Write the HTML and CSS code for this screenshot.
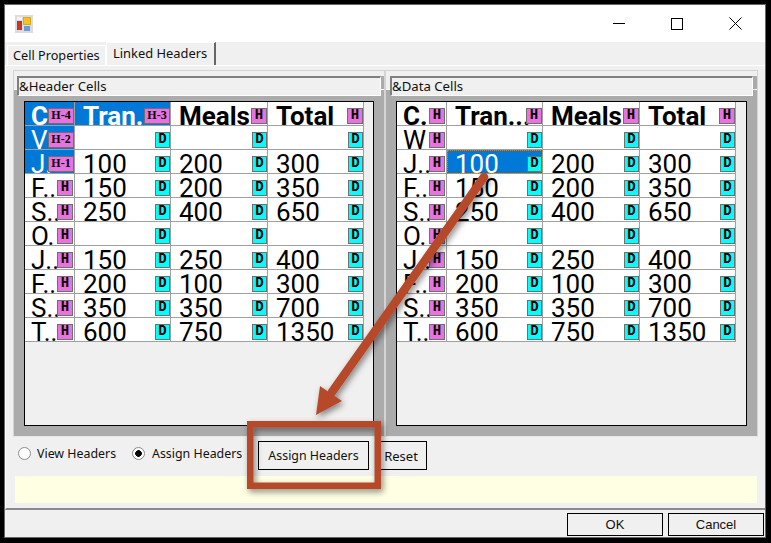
FILE: index.html
```html
<!DOCTYPE html>
<html lang="en">
<head>
<meta charset="utf-8">
<title>Linked Headers</title>
<link rel="stylesheet" href="styles.css">
</head>
<body>
<div class="window">
  <header class="titlebar">
    <svg class="app-icon" width="18" height="18" viewBox="0 0 18 18">
      <rect width="18" height="18" fill="#dcdcdc"/>
      <rect x="8.5" y="2.5" width="7" height="7" fill="#f6c324" stroke="#d9a928"/>
      <rect x="2.5" y="6.5" width="4" height="8" fill="#c8382c" stroke="#9c4038"/>
      <rect x="9" y="11" width="6" height="5" fill="#6a9be0"/>
      <rect x="2" y="2" width="5" height="3" fill="#f4f4f4"/>
    </svg>
    <div class="win-controls">
      <svg width="12" height="12" viewBox="0 0 12 12"><path d="M0 5.5H12" stroke="#000" fill="none"/></svg>
      <svg width="12" height="12" viewBox="0 0 12 12"><rect x=".5" y=".5" width="11" height="11" stroke="#000" fill="none"/></svg>
      <svg width="13" height="13" viewBox="0 0 13 13"><path d="M.5.5L12.5 12.5M12.5.5L.5 12.5" stroke="#000" fill="none"/></svg>
    </div>
  </header>
  <nav class="tabs">
    <span class="tab">Cell Properties</span>
    <span class="tab tab-active">Linked Headers</span>
  </nav>
  <main class="page">
    <div class="panels">
      <section class="panel">
        <div class="caption">&amp;Header Cells</div>
        <div class="well">
          <div class="grid">
            <div class="cell first head sel"><span class="txt">C</span><b class="tag h wide">H-4</b></div>
            <div class="cell head sel"><span class="txt">Tran.</span><b class="tag h wide">H-3</b></div>
            <div class="cell head"><span class="txt">Meals</span><b class="tag h">H</b></div>
            <div class="cell head"><span class="txt">Total</span><b class="tag h">H</b></div>

            <div class="cell first sel"><span class="txt">V</span><b class="tag h wide">H-2</b></div>
            <div class="cell"><b class="tag d">D</b></div>
            <div class="cell"><b class="tag d">D</b></div>
            <div class="cell"><b class="tag d">D</b></div>

            <div class="cell first sel"><span class="txt">J.</span><b class="tag h wide">H-1</b></div>
            <div class="cell"><span class="txt">100</span><b class="tag d">D</b></div>
            <div class="cell"><span class="txt">200</span><b class="tag d">D</b></div>
            <div class="cell"><span class="txt">300</span><b class="tag d">D</b></div>

            <div class="cell first"><span class="txt">F..</span><b class="tag h">H</b></div>
            <div class="cell"><span class="txt">150</span><b class="tag d">D</b></div>
            <div class="cell"><span class="txt">200</span><b class="tag d">D</b></div>
            <div class="cell"><span class="txt">350</span><b class="tag d">D</b></div>

            <div class="cell first"><span class="txt">S..</span><b class="tag h">H</b></div>
            <div class="cell"><span class="txt">250</span><b class="tag d">D</b></div>
            <div class="cell"><span class="txt">400</span><b class="tag d">D</b></div>
            <div class="cell"><span class="txt">650</span><b class="tag d">D</b></div>

            <div class="cell first"><span class="txt">O.</span><b class="tag h">H</b></div>
            <div class="cell"><b class="tag d">D</b></div>
            <div class="cell"><b class="tag d">D</b></div>
            <div class="cell"><b class="tag d">D</b></div>

            <div class="cell first"><span class="txt">J..</span><b class="tag h">H</b></div>
            <div class="cell"><span class="txt">150</span><b class="tag d">D</b></div>
            <div class="cell"><span class="txt">250</span><b class="tag d">D</b></div>
            <div class="cell"><span class="txt">400</span><b class="tag d">D</b></div>

            <div class="cell first"><span class="txt">F..</span><b class="tag h">H</b></div>
            <div class="cell"><span class="txt">200</span><b class="tag d">D</b></div>
            <div class="cell"><span class="txt">100</span><b class="tag d">D</b></div>
            <div class="cell"><span class="txt">300</span><b class="tag d">D</b></div>

            <div class="cell first"><span class="txt">S..</span><b class="tag h">H</b></div>
            <div class="cell"><span class="txt">350</span><b class="tag d">D</b></div>
            <div class="cell"><span class="txt">350</span><b class="tag d">D</b></div>
            <div class="cell"><span class="txt">700</span><b class="tag d">D</b></div>

            <div class="cell first"><span class="txt">T..</span><b class="tag h">H</b></div>
            <div class="cell"><span class="txt">600</span><b class="tag d">D</b></div>
            <div class="cell"><span class="txt">750</span><b class="tag d">D</b></div>
            <div class="cell"><span class="txt">1350</span><b class="tag d">D</b></div>
          </div>
        </div>
      </section>
      <section class="panel panel-data">
        <div class="caption">&amp;Data Cells</div>
        <div class="well">
          <div class="grid">
            <div class="cell first head"><span class="txt">C.</span><b class="tag h">H</b></div>
            <div class="cell head"><span class="txt">Tran...</span><b class="tag h">H</b></div>
            <div class="cell head"><span class="txt">Meals</span><b class="tag h">H</b></div>
            <div class="cell head"><span class="txt">Total</span><b class="tag h">H</b></div>

            <div class="cell first"><span class="txt">W</span><b class="tag h">H</b></div>
            <div class="cell"><b class="tag d">D</b></div>
            <div class="cell"><b class="tag d">D</b></div>
            <div class="cell"><b class="tag d">D</b></div>

            <div class="cell first"><span class="txt">J..</span><b class="tag h">H</b></div>
            <div class="cell sel focus"><span class="txt">100</span><b class="tag d">D</b></div>
            <div class="cell"><span class="txt">200</span><b class="tag d">D</b></div>
            <div class="cell"><span class="txt">300</span><b class="tag d">D</b></div>

            <div class="cell first"><span class="txt">F..</span><b class="tag h">H</b></div>
            <div class="cell"><span class="txt">150</span><b class="tag d">D</b></div>
            <div class="cell"><span class="txt">200</span><b class="tag d">D</b></div>
            <div class="cell"><span class="txt">350</span><b class="tag d">D</b></div>

            <div class="cell first"><span class="txt">S..</span><b class="tag h">H</b></div>
            <div class="cell"><span class="txt">250</span><b class="tag d">D</b></div>
            <div class="cell"><span class="txt">400</span><b class="tag d">D</b></div>
            <div class="cell"><span class="txt">650</span><b class="tag d">D</b></div>

            <div class="cell first"><span class="txt">O.</span><b class="tag h">H</b></div>
            <div class="cell"><b class="tag d">D</b></div>
            <div class="cell"><b class="tag d">D</b></div>
            <div class="cell"><b class="tag d">D</b></div>

            <div class="cell first"><span class="txt">J..</span><b class="tag h">H</b></div>
            <div class="cell"><span class="txt">150</span><b class="tag d">D</b></div>
            <div class="cell"><span class="txt">250</span><b class="tag d">D</b></div>
            <div class="cell"><span class="txt">400</span><b class="tag d">D</b></div>

            <div class="cell first"><span class="txt">F..</span><b class="tag h">H</b></div>
            <div class="cell"><span class="txt">200</span><b class="tag d">D</b></div>
            <div class="cell"><span class="txt">100</span><b class="tag d">D</b></div>
            <div class="cell"><span class="txt">300</span><b class="tag d">D</b></div>

            <div class="cell first"><span class="txt">S..</span><b class="tag h">H</b></div>
            <div class="cell"><span class="txt">350</span><b class="tag d">D</b></div>
            <div class="cell"><span class="txt">350</span><b class="tag d">D</b></div>
            <div class="cell"><span class="txt">700</span><b class="tag d">D</b></div>

            <div class="cell first"><span class="txt">T..</span><b class="tag h">H</b></div>
            <div class="cell"><span class="txt">600</span><b class="tag d">D</b></div>
            <div class="cell"><span class="txt">750</span><b class="tag d">D</b></div>
            <div class="cell"><span class="txt">1350</span><b class="tag d">D</b></div>
          </div>
        </div>
      </section>
    </div>
    <div class="controls">
      <label class="radio-row view"><span class="radio"></span>View Headers</label>
      <label class="radio-row assign"><span class="radio on"></span>Assign Headers</label>
      <button class="btn btn-assign" type="button">Assign Headers</button>
      <button class="btn btn-reset" type="button">Reset</button>
    </div>
    <div class="message"></div>
  </main>
  <footer class="footer">
    <button class="btn btn-foot" type="button">OK</button>
    <button class="btn btn-foot" type="button">Cancel</button>
  </footer>
</div>
<svg class="annot" width="771" height="543" viewBox="0 0 771 543">
  <defs>
    <filter id="sh" x="-20%" y="-20%" width="140%" height="140%">
      <feDropShadow dx="2" dy="3" stdDeviation="3" flood-color="#000" flood-opacity=".45"/>
    </filter>
  </defs>
  <g filter="url(#sh)">
    <path d="M250.25 424.25H377.75V485.75H250.25Z" fill="none" stroke="#b5482b" stroke-width="6.5"/>
    <path d="M484 177L332 392" fill="none" stroke="#b5482b" stroke-width="8.5" stroke-linecap="round"/>
    <path d="M316 415L320 386L342 401Z" fill="#b5482b"/>
  </g>
</svg>
</body>
</html>
```
FILE: styles.css
```css
* { box-sizing: border-box; }
html, body { margin: 0; padding: 0; }
body { width: 771px; height: 543px; overflow: hidden; background: #000; position: relative; font-family: "Noto Sans", "Open Sans", sans-serif; }
.window { width: 762px; height: 534px; margin: 4px 0 0 4px; background: #f0f0f0; border: 1px solid #666; display: flex; flex-direction: column; }
.titlebar { height: 37px; flex: none; background: #fff; display: flex; align-items: center; justify-content: space-between; padding: 0 23px 0 10px; }
.app-icon { display: block; margin-top: 1px; }
.win-controls { display: flex; align-items: center; gap: 46px; }
.win-controls svg { display: block; }
.tabs { height: 23px; flex: none; display: flex; align-items: flex-end; padding-left: 2px; font-size: 12.7px; color: #111; }
.tab { width: 99px; height: 20px; padding-left: 5px; line-height: 19px; background: #f0f0f0; border: 1px solid #fff; border-bottom: 0; white-space: nowrap; }
.tab-active { width: 110px; height: 23px; font-size: 12.9px; line-height: 20px; padding-left: 6px; border-right: 2px solid #666; }
.page { height: 445px; flex: none; border-left: 1px solid #fff; border-top: 1px solid #fff; border-bottom: 2px solid #8a8a8a; padding: 4px 0 0 7px; display: flex; flex-direction: column; }
.panels { display: flex; height: 367px; flex: none; }
.panel { width: 372px; border: 1px solid #d4d4d4; border-bottom-color: #e8e8e8; padding-top: 5px; display: flex; flex-direction: column; background: linear-gradient(#ababab, #ababab) right top 5px / 4px 100% no-repeat #f0f0f0; }
.panel-data { width: 373px; }
.caption { height: 20px; width: 364px; margin-left: 3px; flex: none; font-size: 13.2px; line-height: 16px; border: 1px solid #fff; border-top: 2px solid #808080; border-left: 2px solid #808080; background: #f0f0f0; color: #111; position: relative; z-index: 1; white-space: nowrap; }
.panel-data .caption { width: 363px; margin-left: 4px; }
.well { flex: 1; margin-top: -7px; background: #ababab; border-top: 1px solid #fff; padding: 11px 10px 10px; }
.grid { height: 325px; background: #f0f0f0; border: 1px solid #000; display: grid; grid-template-columns: 50px 96px 97px 96px; grid-auto-rows: 24px; align-content: start; justify-content: start; }
.cell { position: relative; background: #fff; border-right: 1px solid #a0a0a0; border-bottom: 1px solid #a0a0a0; overflow: hidden; font-family: Roboto, "Noto Sans", sans-serif; font-size: 26px; color: #000; padding-left: 8px; white-space: nowrap; }
.cell.first { padding-left: 6px; }
.cell.head { font-weight: 700; }
.cell.sel { background: #0078d7; color: #fff; }
.cell.focus { outline: 1px dotted #d08a20; outline-offset: -1px; }
.txt { display: block; line-height: 27px; margin-top: 1px; }
.tag { position: absolute; right: 0; bottom: 1px; width: 15px; height: 16px; border: 1px solid #6f6f6f; font: 700 14px/13px "Liberation Mono", monospace; text-align: center; color: #000; }
.tag.h { width: 16px; background: #e873e0; }
.tag.d { background: #00ffff; }
.first .tag.h { right: 1px; }
.tag.h.wide { width: 26px; right: 0; font: 700 12px/13px "Liberation Serif", serif; }
.controls { position: relative; height: 39px; flex: none; font-size: 12.4px; color: #111; }
.radio-row { position: absolute; top: 9px; display: flex; align-items: center; line-height: 16px; white-space: nowrap; }
.view { left: 5px; gap: 6px; }
.assign { left: 119px; gap: 7px; }
.radio { width: 13px; height: 13px; margin-bottom: 2px; border-radius: 50%; background: #fff; border: 1px solid #8c8c8c; display: block; }
.radio.on { background: radial-gradient(circle, #000 0 3px, #fff 3.6px); }
.btn { font: 12.4px "Noto Sans", "Open Sans", sans-serif; color: #111; background: #f0f0f0; border: 1px solid #000; padding: 0; }
.btn-assign { position: absolute; left: 245px; top: 4px; width: 111px; height: 29px; }
.btn-reset { position: absolute; left: 362px; top: 4px; width: 52px; height: 29px; font-size: 13px; }
.message { height: 27px; width: 742px; flex: none; background: #ffffe3; margin-left: 2px; }
.footer { flex: 1; display: flex; justify-content: flex-end; align-items: flex-start; gap: 5px; padding: 3px 1px 0 0; }
.btn-foot { width: 96px; height: 23px; font: 13px "Liberation Sans", Arial, sans-serif; }
.annot { position: absolute; left: 0; top: 0; pointer-events: none; }
```
